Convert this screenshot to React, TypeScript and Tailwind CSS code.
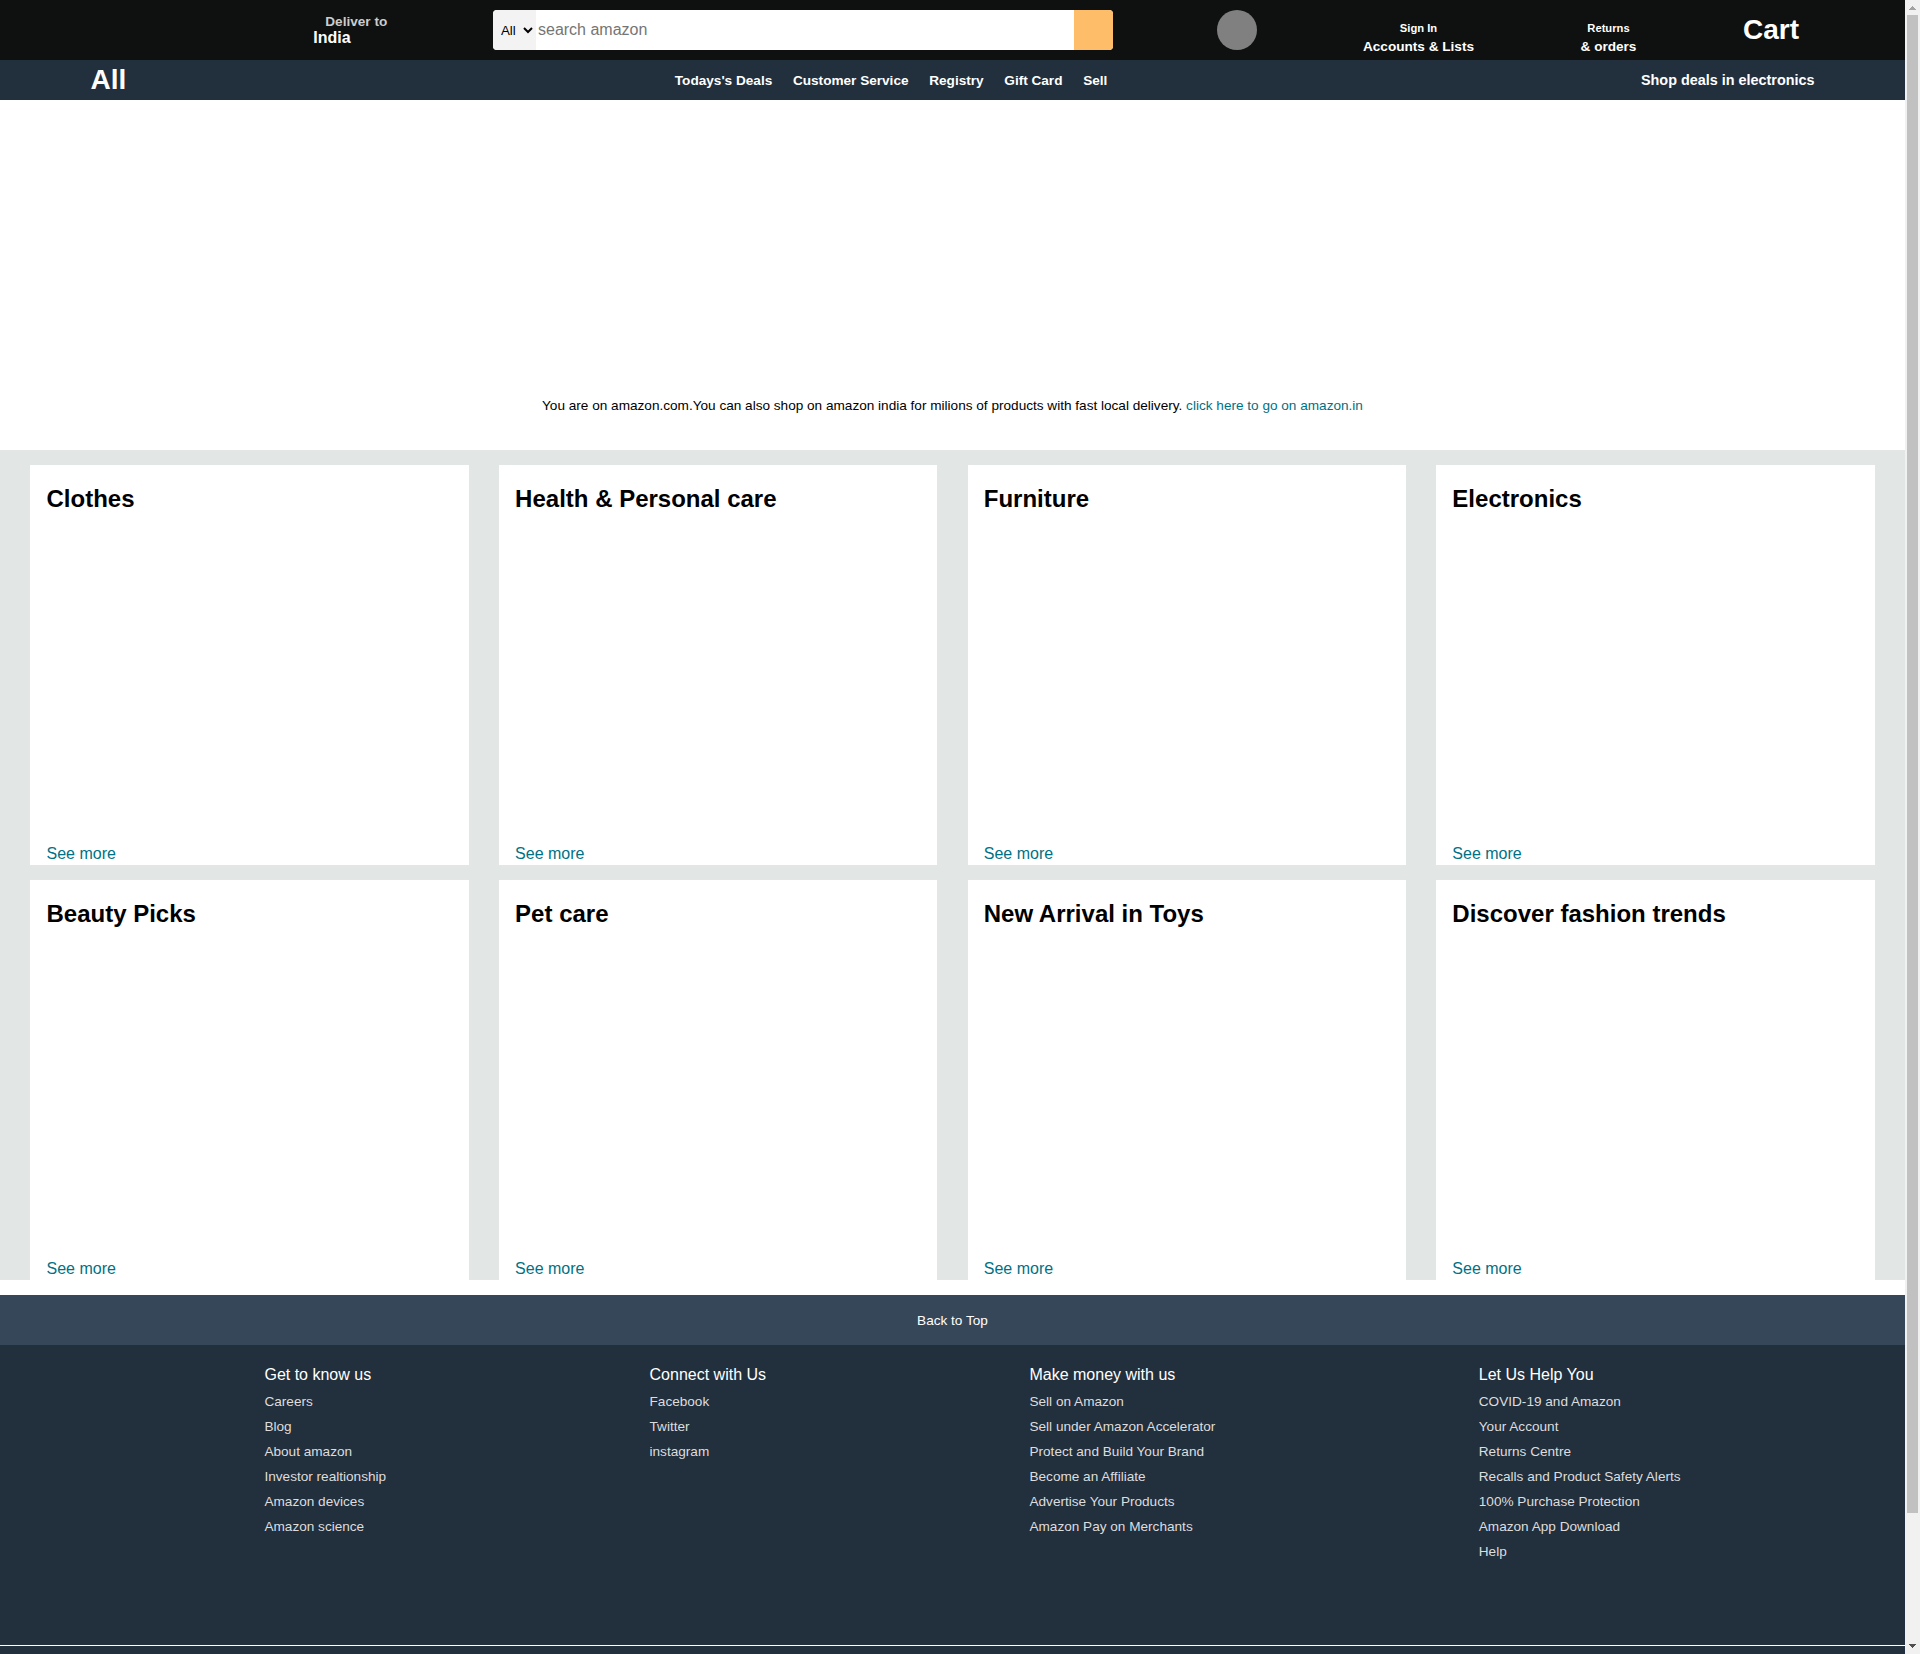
const panelLinks = ["Todays's Deals", "Customer Service", "Registry", "Gift Card", "Sell"];

const categories = [
  "Clothes",
  "Health & Personal care",
  "Furniture",
  "Electronics",
  "Beauty Picks",
  "Pet care",
  "New Arrival in Toys",
  "Discover fashion trends",
];

const footerColumns = [
  {
    title: "Get to know us",
    links: ["Careers", "Blog", "About amazon", "Investor realtionship", "Amazon devices", "Amazon science"],
  },
  { title: "Connect with Us", links: ["Facebook", "Twitter", "instagram"] },
  {
    title: "Make money with us",
    links: [
      "Sell on Amazon",
      "Sell under Amazon Accelerator",
      "Protect and Build Your Brand",
      "Become an Affiliate",
      "Advertise Your Products",
      "Amazon Pay on Merchants",
    ],
  },
  {
    title: "Let Us Help You",
    links: [
      "COVID-19 and Amazon",
      "Your Account",
      "Returns Centre",
      "Recalls and Product Safety Alerts",
      "100% Purchase Protection",
      "Amazon App Download",
      "Help",
    ],
  },
];

function NavBar() {
  return (
    <header className="flex h-[60px] items-start whitespace-nowrap bg-[#0f1111] font-bold text-white">
      <div className="ml-[313.3px] mt-3.5 w-[179.7px] shrink-0">
        <p className="ml-3 text-[13.6px] leading-[15px] text-[#cccccc]">Deliver to</p>
        <p className="text-base leading-[18px]">India</p>
      </div>
      <div className="mt-2.5 flex h-10 w-[620px] shrink-0 overflow-hidden rounded bg-white font-normal">
        <select className="w-[43px] bg-[#f3f3f3] px-1 text-[13.333px] text-black outline-none">
          <option>All</option>
        </select>
        <input
          className="min-w-0 flex-1 bg-white px-0.5 text-base text-black outline-none placeholder:text-[#757575]"
          placeholder="search amazon"
        />
        <button aria-label="Search" className="w-[39px] bg-[#febd68]" />
      </div>
      <div className="ml-[104px] mt-2.5 size-10 shrink-0 rounded-full bg-[#808080]" />
      <div className="ml-[106px] mt-[22px] shrink-0 text-center">
        <p className="text-[11.2px] leading-[13px]">Sign In</p>
        <p className="mt-1 text-[13.6px] leading-[15px]">Accounts &amp; Lists</p>
      </div>
      <div className="ml-[106.5px] mt-[22px] shrink-0 text-center">
        <p className="text-[11.2px] leading-[13px]">Returns</p>
        <p className="mt-1 text-[13.6px] leading-[15px]">&amp; orders</p>
      </div>
      <div className="ml-auto mr-[106px] mt-3.5 shrink-0 text-[28px] leading-8">Cart</div>
    </header>
  );
}

function Panel() {
  return (
    <nav className="flex h-10 items-start whitespace-nowrap bg-[#222f3d] font-bold text-white">
      <div className="ml-[90.5px] mt-1 w-[584.3px] shrink-0 text-[28px] leading-8">All</div>
      <div className="mt-[13px] flex gap-[20.7px] text-[13.6px] leading-[15px]">
        {panelLinks.map((label) => (
          <p key={label}>{label}</p>
        ))}
      </div>
      <div className="ml-auto mr-[90.5px] mt-3 text-[14.4px] leading-4">Shop deals in electronics</div>
    </nav>
  );
}

function ShopCard({ title }: { title: string }) {
  return (
    <section className="flex h-[400px] w-[23%] flex-col bg-white px-4 pt-5">
      <h2 className="text-2xl leading-[27px] font-bold">{title}</h2>
      <a className="mt-auto pb-0.5 text-base leading-[18px] text-[#007185]">See more</a>
    </section>
  );
}

function Footer() {
  return (
    <footer className="mt-[15px]">
      <div className="flex h-[50px] items-start justify-center bg-[#37475a] pt-[18px] text-[13.6px] leading-[15px] text-white">
        Back to Top
      </div>
      <div className="flex h-[300px] justify-evenly bg-[#222f3d] px-px pt-5 text-white">
        {footerColumns.map((column) => (
          <ul key={column.title} className="pl-10">
            <li className="mt-px mb-[5px] text-base leading-[18px]">{column.title}</li>
            {column.links.map((link) => (
              <li key={link} className="text-[13.6px] leading-[25px] text-[#dddddd]">
                {link}
              </li>
            ))}
          </ul>
        ))}
      </div>
      <div className="h-[9px] border-t border-white bg-[#222f3d]" />
    </footer>
  );
}

function Scrollbar() {
  return (
    <aside className="flex w-[15px] shrink-0 flex-col items-center bg-[#f1f1f1]">
      <svg className="h-[15px] w-[15px] shrink-0" viewBox="0 0 15 15" shapeRendering="crispEdges">
        <path d="M7 6h1v1h1v1h1v1h1v1H4V9h1V8h1V7h1z" fill="#a3a3a3" />
      </svg>
      <div className="h-[1498px] w-[11px] bg-[#c1c1c1]" />
      <svg className="mt-auto h-[15px] w-[15px] shrink-0" viewBox="0 0 15 15" shapeRendering="crispEdges">
        <path d="M4 5h7v1h-1v1H9v1H8v1H7V8H6V7H5V6H4z" fill="#505050" />
      </svg>
    </aside>
  );
}

export default function App() {
  return (
    <div className="flex h-[1654px] w-[1920px] overflow-hidden bg-white font-['Liberation_Sans',Arial,sans-serif] text-black">
      <div className="w-[1905px] shrink-0">
        <NavBar />
        <Panel />
        <div className="flex h-[350px] items-end justify-center pb-[37px]">
          <p className="text-[13.6px] leading-[15px]">
            You are on amazon.com.You can also shop on amazon india for milions of products with fast local delivery.{" "}
            <a className="text-[#007185]">click here to go on amazon.in</a>
          </p>
        </div>
        <main className="flex h-[830px] flex-wrap content-start justify-evenly gap-y-[15px] bg-[#e2e7e6] pt-[15px]">
          {categories.map((title) => (
            <ShopCard key={title} title={title} />
          ))}
        </main>
        <Footer />
      </div>
      <Scrollbar />
    </div>
  );
}
